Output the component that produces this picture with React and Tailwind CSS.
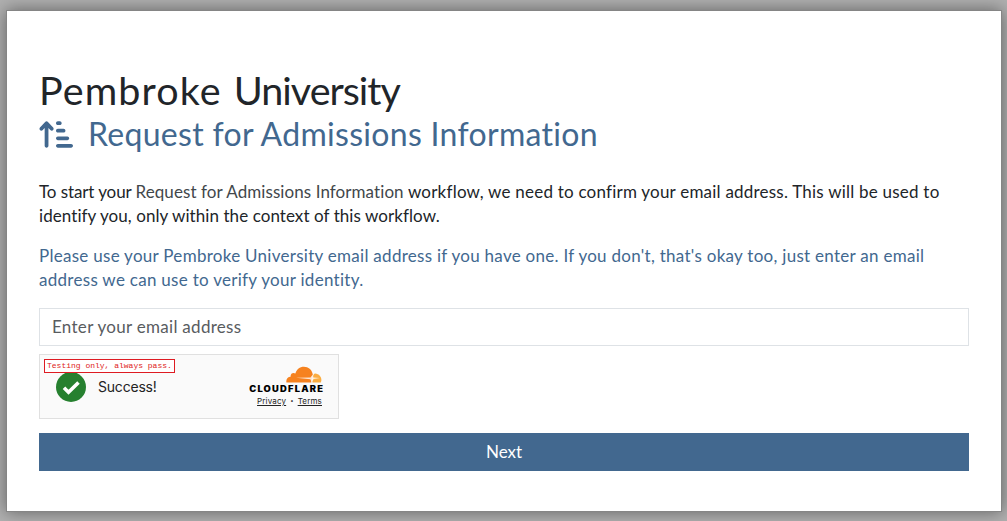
import { FaArrowUpShortWide } from "react-icons/fa6";

function CloudflareLogo() {
  return (
    <svg className="block h-[17px] w-[36px]" viewBox="0 0 36 17" aria-hidden="true">
      <path d="M26.5 16.5C26 13 27 8 29.1 7.6C33 7.8 35.5 10.9 35.4 14.5L34.8 16.5Z" fill="#fbad41" />
      <path
        d="M.4 16.5C-.2 13.2 1.8 10.9 4.6 10.8C4.2 7.8 7 6.1 9.4 7.6C10.6 3.4 13.8 .8 17.9 .8C22.5 .8 25.8 3.9 26.7 8C27.3 10.2 26 12.5 25.3 16.5Z"
        fill="#f6821f"
      />
      <path d="M10 11.8L24.5 11.6L26.8 8.6L27.4 11.4L34 12.1L27.6 13L25.6 16.5L24.4 13.2Z" fill="#fff" opacity=".8" />
    </svg>
  );
}

function Turnstile() {
  return (
    <div className="relative mt-2 flex h-[65px] w-[300px] items-center border border-[#e0e0e0] bg-[#fafafa] font-['Inter',sans-serif]">
      <svg className="ml-4 size-[30px] shrink-0" viewBox="0 0 30 30" aria-hidden="true">
        <circle cx="15" cy="15" r="15" fill="#26802f" />
        <path d="M8 15.8L12.5 20.2L22.5 10.5" fill="none" stroke="#fff" strokeWidth="3.6" />
      </svg>
      <span className="ml-3 text-[14px] leading-5 tracking-[-0.2px] text-[#232323]">Success!</span>
      <div className="mr-[16px] ml-auto flex flex-col items-end pb-px">
        <CloudflareLogo />
        <span className="mt-px mr-[-2px] origin-right scale-x-[1.1] text-[8.5px] leading-[10px] font-black tracking-[1.1px] text-black">CLOUDFLARE</span>
        <div className="mt-[2px] flex gap-1 text-[8px] leading-[10px] tracking-[0.15px] text-[#232323]">
          <span className="underline">Privacy</span>
          <span className="text-[6px]">•</span>
          <span className="underline">Terms</span>
        </div>
      </div>
      <div className="absolute top-[4px] left-[4px] flex h-[14px] w-[131px] items-center border border-[#de1b22] bg-white pl-[2px] font-['Liberation_Mono',monospace] text-[8px] leading-3 whitespace-nowrap text-[#de1b22]">
        Testing only, always pass.
      </div>
    </div>
  );
}

export default function App() {
  return (
    <div className="h-[521px] overflow-hidden bg-[#b0b0b0] px-[6px] pt-[10px] font-['Lato',sans-serif] text-[#212529] [font-variant-ligatures:none]">
      <main className="h-[502px] w-[996px] border border-[#858585] bg-white px-8 pt-[55px] shadow-[0_0_16px_rgba(0,0,0,0.45)]">
        <h1 className="h-[48px] text-[39.5px] leading-[47px] whitespace-nowrap">
          <span className="tracking-[1.1px]">Pembroke</span> <span className="ml-[2px] tracking-[-1px]">University</span>
        </h1>
        <h2 className="flex h-[40px] items-center text-[32px] leading-[40px] tracking-[0.3px] whitespace-nowrap text-[#42688f]">
          <FaArrowUpShortWide className="h-[31px] w-[34px] shrink-0" />
          <span className="ml-[15px]">Request for Admissions Information</span>
        </h2>
        <p className="mt-[26px] text-[17px] leading-6 whitespace-nowrap">
          <span className="block">
            <span className="tracking-[-0.1px]">To start your </span>
            <span className="tracking-[0.08px] text-[#42474b]">Request for Admissions Information</span>
            <span className="tracking-[0.22px]"> workflow, we need to confirm your email address. This will be used to</span>
          </span>
          <span className="block tracking-[0.07px]">identify you, only within the context of this workflow.</span>
        </p>
        <p className="mt-4 text-[17px] leading-6 whitespace-nowrap text-[#42688f]">
          <span className="block tracking-[0.28px]">Please use your Pembroke University email address if you have one. If you don't, that's okay too, just enter an email</span>
          <span className="block tracking-[0.29px]">address we can use to verify your identity.</span>
        </p>
        <input
          type="email"
          placeholder="Enter your email address"
          className="mt-4 block h-[38px] w-full border border-[#dee2e6] px-3 pb-0.5 text-[17px] tracking-[0.29px] placeholder:text-[#595c5f]"
        />
        <Turnstile />
        <button className="mt-[14px] block h-[38px] w-full bg-[#42688f] text-[17px] text-white">Next</button>
      </main>
    </div>
  );
}
